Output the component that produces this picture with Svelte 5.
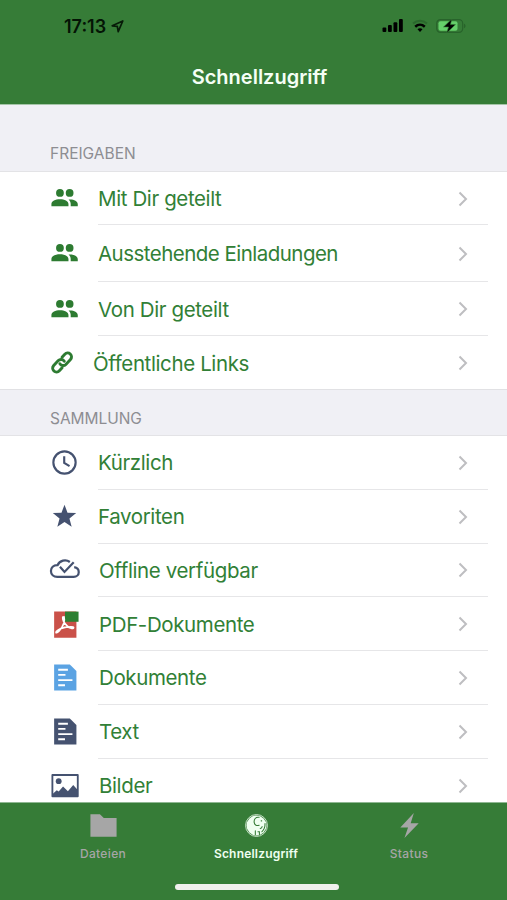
<script>
  const freigaben = [
    { label: 'Mit Dir geteilt', icon: 'people', height: 53 },
    { label: 'Ausstehende Einladungen', icon: 'people', height: 57 },
    { label: 'Von Dir geteilt', icon: 'people', height: 54 },
    { label: 'Öffentliche Links', icon: 'link', height: 53 },
  ];

  const sammlung = [
    { label: 'Kürzlich', icon: 'clock' },
    { label: 'Favoriten', icon: 'star' },
    { label: 'Offline verfügbar', icon: 'offline' },
    { label: 'PDF-Dokumente', icon: 'pdf' },
    { label: 'Dokumente', icon: 'document' },
    { label: 'Text', icon: 'text' },
    { label: 'Bilder', icon: 'image' },
  ];

  const tabs = [
    { label: 'Dateien', icon: 'folder' },
    { label: 'Schnellzugriff', icon: 'elephant', active: true },
    { label: 'Status', icon: 'bolt' },
  ];
</script>

{#snippet icon(name)}
  <svg class="icon {name}" viewBox="0 0 32 32">
    {#if name === 'people'}
      <circle cx="11.3" cy="10.3" r="4" />
      <circle cx="21.3" cy="10.3" r="4" />
      <path d="M2.5 24v-2.2c0-3.2 4.1-5 8.8-5s8.8 1.8 8.8 5V24zM20.2 17c5-.5 9.5 1.5 9.5 4.800V24h-7.300v-2.200c0-2-.8-3.600-2.200-4.800z" />
    {:else if name === 'link'}
      <g transform="rotate(-47 13.500 16)" fill="none" stroke="currentColor" stroke-width="3" stroke-linecap="round">
        <path d="M9.500 19.800H5.300a4 4 0 0 1 0-8h7a4 4 0 0 1 3.700 5" />
        <path d="M17.500 12.200h4.200a4 4 0 0 1 0 8h-7a4 4 0 0 1-3.700-5" />
      </g>
    {:else if name === 'clock'}
      <g fill="none" stroke="currentColor" stroke-width="2.200">
        <circle cx="16" cy="16" r="11.500" />
        <path d="M15.700 9.500v7l5.500 3.200" />
      </g>
    {:else if name === 'star'}
      <path d="M16 3.800l3.100 8.200 9 .4-7 5.600 2.300 8.700-7.400-4.900-7.400 4.900 2.300-8.700-7-5.600 9-.4z" />
    {:else if name === 'offline'}
      <g fill="none" stroke="currentColor" stroke-width="2.300">
        <path d="M21.500 7.200A8.500 8.500 0 0 0 8.800 10.500C4.500 10.400 2 13 2 16.500c0 3.500 2.700 6 6.500 6h17c3 0 5.200-1.900 5.200-4.800 0-2.600-1.900-4.700-4.700-5.100" />
        <path d="M11.300 12.200l4.700 5.300L25.500 7.500" />
      </g>
    {:else if name === 'pdf'}
      <path fill="#ca5149" d="M5.300 2.700h23v27h-23z" />
      <path fill="#2d7f31" d="M16.500 2.700h14v10.500h-14z" />
      <g fill="none" stroke="#fff" stroke-width="1.700" stroke-linecap="round" stroke-linejoin="round">
        <path d="M15.500 8c1.300 5-1.700 10.800-4.800 14.300-1.900 2.100-3.300 2.700-3.500 1.900-.4-1.400 3.600-3.900 9.300-5.200 5-1.100 9-.9 8.900.3-.2 1.700-4.200.6-6.700-1.900-2.600-2.600-4.900-6.600-4.500-9.100" />
      </g>
    {:else if name === 'document' || name === 'text'}
      <path d="M5.300 2.500h16.200l6.800 6.800v20.200h-23z" />
      <path class="lines" d="M9.500 8h10M9.500 13.300h7.500M9.500 18.700h14.700M9.500 24h7" />
    {:else if name === 'image'}
      <path fill="none" stroke="currentColor" stroke-width="1.900" stroke-linejoin="round" d="M3.500 5.200h26.200v22H3.500z" />
      <circle cx="10" cy="11.500" r="3" />
      <path d="M4 24.500l4-3.500 2 1.300 4.500-5.300 5 5 5.500-6.500 4.200 4.500v7.200H4z" />
    {:else if name === 'folder'}
      <path d="M2.500 4.500h9.800l4 3.800h13.200v19.200h-27z" />
    {:else if name === 'elephant'}
      <circle cx="16" cy="16" r="11.300" fill="none" stroke="#dcefdd" stroke-width=".9" />
      <circle cx="16" cy="16" r="10.300" />
      <g fill="none" stroke="#367c37" stroke-width="1.100" stroke-linecap="round">
        <path d="M18.800 7.500c-3.700-.6-5.600 2.200-5.200 5.300.4 2.800 2.700 3.900 5.100 2.900" />
        <path d="M20.800 11.200h.6M24.800 14c.2 4-1 6.500-3.300 8.500M21.800 17c-.1 1.400-.9 2-1.900 2.200M14.800 25.500v-4M17.500 22.500h1.500v3" />
      </g>
    {:else}
      <path d="M20.500 3L6.500 18h8l-3.700 11L25.500 13.700h-8.300z" />
    {/if}
  </svg>
{/snippet}

{#snippet row(item)}
  <li class="row {item.icon}" style:height={item.height ? `${item.height}px` : null}>
    <span class="row-icon">{@render icon(item.icon)}</span>
    <div class="row-body">
      <span class="label" class:long={item.label.length > 20}>{item.label}</span>
      <svg class="chevron" viewBox="0 0 10 16"><path d="M1.500 1.500L8 8l-6.500 6.500" /></svg>
    </div>
  </li>
{/snippet}

<div class="screen">
  <header>
    <div class="status-bar">
      <div class="time">
        <span>17:13</span>
        <svg width="13" height="13" viewBox="0 0 13 13">
          <path d="M1.200 5.800L11.800 1 7.200 11.700 6.300 6.400z" fill="none" stroke="#071b08" stroke-width="1.700" stroke-linejoin="round" />
        </svg>
      </div>
      <div class="indicators">
        <svg width="22" height="14" viewBox="0 0 22 14">
          <rect x=".5" y="8.500" width="3.800" height="4.500" rx="1" />
          <rect x="6" y="6" width="3.800" height="7" rx="1" />
          <rect x="11.500" y="3.300" width="3.800" height="9.700" rx="1" />
          <rect x="17" y="0" width="3.800" height="13" rx="1" />
        </svg>
        <svg width="16" height="14" viewBox="0 0 16 14">
          <g fill="none" stroke-width="2.100">
            <path stroke="#2b682d" d="M1 4.600c4-3.800 10-3.800 14 0" />
            <path stroke="#000" stroke-width="2.500" d="M3.200 7.700c2.800-2.500 6.800-2.500 9.600 0" />
          </g>
          <path d="M5.500 10.300c1.500-1.300 3.500-1.300 5 0L8 13z" />
        </svg>
        <svg width="30" height="14" viewBox="0 0 30 14">
          <rect x=".7" y=".7" width="26" height="12.600" rx="3.700" fill="none" stroke="#28632b" stroke-width="1.200" />
          <path fill="#28632b" d="M28 4.800c2 .7 2 3.700 0 4.400z" />
          <rect x="2.500" y="2.300" width="19" height="9.400" rx="2" fill="#65cf6a" />
          <path stroke="#358038" stroke-width=".6" d="M15.800 0L7.500 8h5l-1.800 6L19.500 5.600h-5z" />
        </svg>
      </div>
    </div>
    <h1>Schnellzugriff</h1>
  </header>

  <main>
    <h2 class="first">FREIGABEN</h2>
    <ul>
      {#each freigaben as item}
        {@render row(item)}
      {/each}
    </ul>
    <h2>SAMMLUNG</h2>
    <ul>
      {#each sammlung as item}
        {@render row(item)}
      {/each}
    </ul>
  </main>

  <footer>
    <nav>
      {#each tabs as tab}
        <div class="tab" class:active={tab.active}>
          {@render icon(tab.icon)}
          <span>{tab.label}</span>
        </div>
      {/each}
    </nav>
    <div class="home-indicator"></div>
  </footer>
</div>

<style>
  :global(body) {
    margin: 0;
  }

  .screen {
    width: 507px;
    height: 900px;
    display: flex;
    flex-direction: column;
    overflow: hidden;
    background: #fff;
    font-family: Inter, "Liberation Sans", sans-serif;
  }

  header {
    flex: none;
    height: 104px;
    background: #367c37;
    border-bottom: 1px solid #a5c5a8;
  }

  .status-bar {
    display: flex;
    justify-content: space-between;
    align-items: center;
    height: 52px;
    padding: 0 41px 0 64px;
  }

  .time {
    display: flex;
    align-items: center;
    gap: 5px;
    font-size: 18px;
    font-weight: 600;
    color: #041405;
  }

  .indicators {
    display: flex;
    align-items: center;
    gap: 8px;
  }

  h1 {
    margin: 0;
    line-height: 50px;
    font-size: 20px;
    font-weight: 600;
    text-align: center;
    color: #f5fff5;
    padding-left: 12px;
  }

  main {
    flex: 1;
    min-height: 0;
    overflow: hidden;
  }

  h2 {
    box-sizing: border-box;
    height: 47px;
    margin: 0;
    padding: 19px 50px 0;
    border-top: 1px solid #e1e1e4;
    border-bottom: 1px solid #e3e3e6;
    background: #f0f0f5;
    color: #8d8d92;
    font-size: 15.5px;
    font-weight: 400;
    line-height: 19px;
    letter-spacing: -0.05px;
  }

  h2.first {
    height: 67px;
    padding-top: 39px;
    border-top: 0;
    letter-spacing: 0;
  }

  ul {
    margin: 0;
    padding: 0;
    list-style: none;
  }

  .row {
    display: flex;
    height: 53.75px;
    color: #455270;
  }

  .row.people,
  .row.link {
    color: #2d7b31;
  }

  .row-icon {
    display: flex;
    align-items: center;
    width: 48px;
    padding-left: 49px;
  }

  .icon {
    display: block;
    width: 31px;
    height: 31px;
    fill: currentColor;
  }

  .row-body {
    box-sizing: border-box;
    flex: 1;
    display: flex;
    align-items: center;
    justify-content: space-between;
    margin-right: 19px;
    margin-left: 1px;
    padding-top: 1px;
    padding-right: 20px;
    border-bottom: 1px solid #e6e6e8;
  }

  .row:last-child .row-body {
    border-bottom: 0;
  }

  .label {
    font-size: 20.5px;
    letter-spacing: -0.38px;
    white-space: nowrap;
    color: #318036;
  }

  .label.long {
    letter-spacing: -0.53px;
  }

  .link .label {
    margin-left: -5px;
  }

  .offline .label,
  .pdf .label,
  .document .label,
  .text .label,
  .image .label {
    margin-left: 1px;
  }

  .chevron {
    width: 10px;
    height: 16px;
    fill: none;
    stroke: #bebec1;
    stroke-width: 2;
  }

  .row.document {
    color: #5ba3e3;
  }

  .lines {
    fill: none;
    stroke: #fff;
    stroke-width: 2;
  }

  footer {
    flex: none;
    box-sizing: border-box;
    height: 98px;
    border-top: 1px solid #8fb792;
    background: #367c37;
  }

  nav {
    display: flex;
    justify-content: center;
    gap: 1px;
    height: 81px;
    margin-left: 5px;
  }

  .tab {
    width: 152px;
    padding-top: 7px;
    display: flex;
    flex-direction: column;
    align-items: center;
    gap: 4px;
    color: #a6a6a6;
    font-size: 12px;
    font-weight: 500;
    line-height: 17px;
    letter-spacing: 0.35px;
  }

  .tab.active {
    color: #effff0;
    font-weight: 600;
    letter-spacing: 0.2px;
  }

  .home-indicator {
    width: 164px;
    height: 6px;
    margin: 0 auto;
    border-radius: 3px;
    background: #f0f0ed;
    transform: translateX(3px);
  }
</style>
